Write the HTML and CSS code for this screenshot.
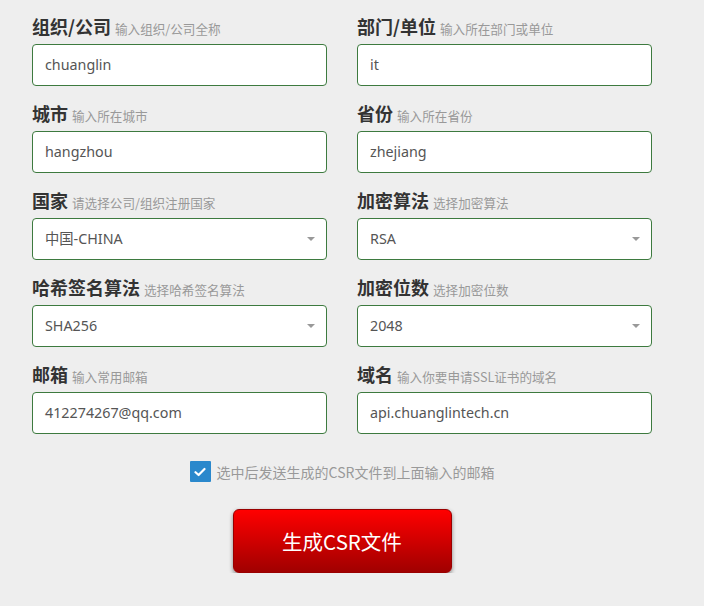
FILE: index.html
```html
<!DOCTYPE html>
<html lang="zh">
<head>
<meta charset="utf-8">
<link rel="stylesheet" href="styles.css">
</head>
<body>
<form class="csr-form">
  <div class="grid">
    <div class="field">
      <div class="label"><b>组织/公司</b><span class="hint">输入组织/公司全称</span></div>
      <div class="input">chuanglin</div>
    </div>
    <div class="field">
      <div class="label"><b>部门/单位</b><span class="hint">输入所在部门或单位</span></div>
      <div class="input">it</div>
    </div>
    <div class="field">
      <div class="label"><b>城市</b><span class="hint">输入所在城市</span></div>
      <div class="input">hangzhou</div>
    </div>
    <div class="field">
      <div class="label"><b>省份</b><span class="hint">输入所在省份</span></div>
      <div class="input">zhejiang</div>
    </div>
    <div class="field">
      <div class="label"><b>国家</b><span class="hint">请选择公司/组织注册国家</span></div>
      <div class="input select">中国-CHINA<span class="caret"></span></div>
    </div>
    <div class="field">
      <div class="label"><b>加密算法</b><span class="hint">选择加密算法</span></div>
      <div class="input select">RSA<span class="caret"></span></div>
    </div>
    <div class="field">
      <div class="label"><b>哈希签名算法</b><span class="hint">选择哈希签名算法</span></div>
      <div class="input select">SHA256<span class="caret"></span></div>
    </div>
    <div class="field">
      <div class="label"><b>加密位数</b><span class="hint">选择加密位数</span></div>
      <div class="input select">2048<span class="caret"></span></div>
    </div>
    <div class="field">
      <div class="label"><b>邮箱</b><span class="hint">输入常用邮箱</span></div>
      <div class="input">412274267@qq.com</div>
    </div>
    <div class="field">
      <div class="label"><b>域名</b><span class="hint">输入你要申请SSL证书的域名</span></div>
      <div class="input">api.chuanglintech.cn</div>
    </div>
  </div>
  <div class="check-row">
    <span class="checkbox"><svg width="12" height="10" viewBox="0 0 12 10"><path d="M1.5 5.2 L4.6 8 L10.5 2" fill="none" stroke="#fff" stroke-width="2.2" stroke-linecap="round" stroke-linejoin="round"/></svg></span>
    <span class="check-text">选中后发送生成的CSR文件到上面输入的邮箱</span>
  </div>
  <div class="btn-row">
    <button type="button" class="btn">生成CSR文件</button>
  </div>
</form>
</body>
</html>
```
FILE: styles.css
```css
html, body {
  margin: 0;
  padding: 0;
  background: #eeeeee;
}
body {
  font-family: "Noto Sans", "Noto Sans CJK SC", sans-serif;
  color: #333;
}
.csr-form {
  width: 620px;
  padding: 14px 0 0 32px;
}
.grid {
  display: grid;
  grid-template-columns: 295px 295px;
  column-gap: 30px;
  row-gap: 15px;
}
.label {
  height: 24px;
  line-height: 24px;
  margin-bottom: 6px;
  white-space: nowrap;
}
.label b {
  font-size: 18px;
  font-weight: 700;
  color: #333;
  font-family: "Noto Sans CJK SC", sans-serif;
}
.hint {
  font-size: 12.6px;
  color: #999;
  margin-left: 4px;
  font-family: "Noto Sans CJK SC", sans-serif;
}
.input {
  box-sizing: border-box;
  height: 42px;
  border: 1px solid #3d7a3f;
  border-radius: 4px;
  background: #fff;
  padding: 0 12px;
  line-height: 40px;
  font-size: 14.3px;
  color: #555;
  position: relative;
}
.caret {
  position: absolute;
  right: 11px;
  top: 18px;
  width: 0;
  height: 0;
  border-left: 4px solid transparent;
  border-right: 4px solid transparent;
  border-top: 4px solid #999;
}
.check-row {
  display: flex;
  align-items: center;
  justify-content: center;
  width: 620px;
  margin-top: 27px;
  height: 21px;
  gap: 6px;
}
.checkbox {
  width: 21px;
  height: 21px;
  background: #2a88cc;
  border-radius: 1px;
  display: flex;
  align-items: center;
  justify-content: center;
}
.check-text {
  font-size: 14px;
  color: #999;
  font-family: "Noto Sans CJK SC", sans-serif;
}
.btn-row {
  width: 620px;
  display: flex;
  justify-content: center;
  margin-top: 27px;
}
.btn {
  width: 219px;
  height: 64px;
  border: 1px solid #900;
  border-radius: 6px;
  background: linear-gradient(#ff0000, #a00000);
  color: #fff;
  font-size: 20.5px;
  font-family: "Noto Sans CJK SC", sans-serif;
  box-shadow: 0 2px 4px rgba(0,0,0,0.45);
  cursor: pointer;
}
```
